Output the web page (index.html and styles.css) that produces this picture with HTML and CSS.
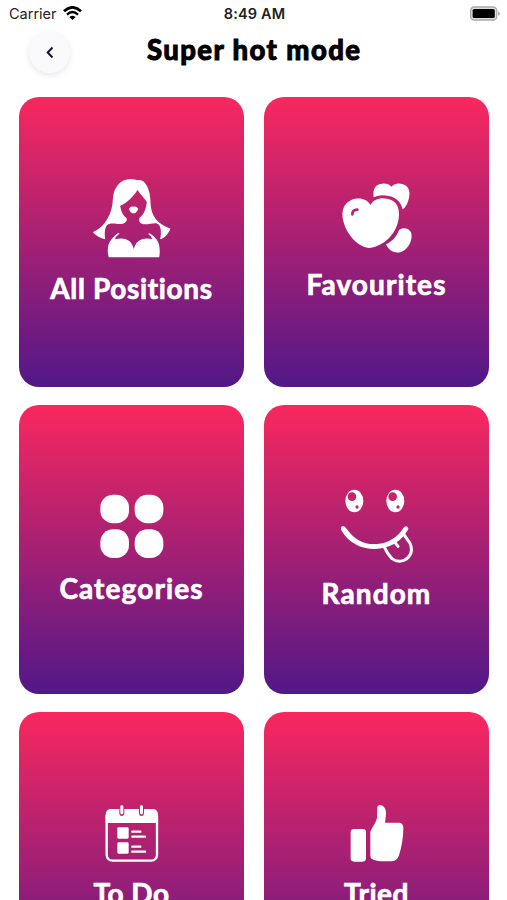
FILE: index.html
```html
<!DOCTYPE html>
<html lang="en">

<head>
    <meta charset="UTF-8">
    <meta name="viewport" content="width=device-width, initial-scale=1.0">
    <title>Super hot mode</title>
    <link rel="stylesheet" href="styles.css">
</head>

<body>
    <div class="status-bar">
        <div class="carrier">
            <span>Carrier</span>
            <svg class="wifi" viewBox="0 0 57 42">
                <path d="M3 16 Q28 -8 54 16" fill="none" stroke="#000" stroke-width="8" />
                <path d="M12 26 Q28 10 45 26" fill="none" stroke="#000" stroke-width="7" />
                <path d="M19 33 Q28 25 38 33 L28.500 42Z" />
            </svg>
        </div>
        <span class="time">8:49 AM</span>
        <svg class="battery" viewBox="0 0 92 44">
            <rect x="2" y="2" width="80" height="40" rx="11" fill="#ddd" stroke="#aaa" stroke-width="4" />
            <rect x="8" y="8" width="68" height="28" rx="5" />
            <path d="M86 15 Q92 17 92 22 Q92 27 86 29Z" fill="#aaa" />
        </svg>
    </div>

    <header>
        <button class="back" aria-label="Back">
            <svg viewBox="0 0 8 13">
                <path d="M6.500 1.500 L1.700 6.500 L6.500 11.500" />
            </svg>
        </button>
        <h1>Super hot mode</h1>
    </header>

    <main class="cards">
        <div class="card all">
            <svg viewBox="36 24 236 240">
                <path d="M151 27 C120 27 100 52 98 88 C97 130 76 170 38 187 C48 198 61 205 75 208 C73 190 73 175 81 165 C94 156 111 164 123 162 C137 160 142 153 139 144 C128 137 122 121 120 107 C142 98 161 78 172 59 C179 72 193 83 200 97 C198 115 191 135 178 143 C174 155 181 162 194 163 C214 163 229 154 237 166 C244 176 243 194 240 208 C255 203 263 192 271 176 C232 163 212 139 211 97 C211 55 193 29 178 30 C169 31 162 27 151 27Z" />
                <path d="M146 116 Q153 107 160 110 Q168 107 174 116 Q169 130 160 130 Q151 130 146 116Z" />
                <path d="M86 262 C80 244 82 222 93 209 Q102 197 114 189 Q120 188 116 193 Q107 199 105 208 C130 201 156 208 161 238 C166 208 194 201 217 208 Q214 198 205 193 Q204 187 211 191 Q222 198 230 209 C240 222 240 248 237 262Z" />
            </svg>
            <span>All Positions</span>
        </div>
        <div class="card favourites">
            <svg viewBox="33 36 213 216">
                <path d="M121 105 C112 86 85 81 64 90 C40 101 32 126 40 154 C50 193 82 230 116 234 C155 231 191 201 203 160 C212 130 207 98 182 89 C158 80 133 84 121 105Z" />
                <path class="shine" d="M67 133 Q67 119 82 119" />
                <path d="M131 82 C127 55 138 42 157 41 C170 40 178 44 184 50 C194 40 207 39 219 43 C239 49 242 70 235 91 C231 105 225 114 218 118 C213 96 197 81 176 78 C158 74 144 76 131 82Z" />
                <path d="M168 223 C186 215 201 198 207 180 C219 170 237 174 243 187 C248 203 242 225 225 239 C205 254 181 250 168 223Z" />
            </svg>
            <span>Favourites</span>
        </div>
        <div class="card categories">
            <svg viewBox="44 41 192 195">
                <rect x="45" y="43" width="86" height="86" rx="38" />
                <rect x="148" y="43" width="86" height="86" rx="38" />
                <rect x="45" y="147" width="86" height="86" rx="38" />
                <rect x="148" y="147" width="86" height="86" rx="38" />
            </svg>
            <span>Categories</span>
        </div>
        <div class="card random">
            <svg viewBox="29 40 222 225">
                <ellipse cx="72" cy="76" rx="27" ry="34" />
                <circle class="pupil" cx="65" cy="63" r="13" />
                <circle class="pupil" cx="80" cy="94" r="5" />
                <ellipse cx="195" cy="76" rx="27" ry="34" />
                <circle class="pupil" cx="187" cy="63" r="13" />
                <circle class="pupil" cx="203" cy="94" r="5" />
                <path d="M33 153 Q40 148 47 157 C72 193 103 208 140 205 C174 203 203 184 219 157 Q226 148 232 154 Q237 159 230 167 C210 200 177 219 134 220 C90 220 55 201 34 166 Q30 158 33 153Z" />
                <path class="line tongue" d="M163 216 Q170 234 185 249 C201 261 222 258 234 245 C247 230 244 213 238 201 L221 177 M192 198 L203 212" />
            </svg>
            <span>Random</span>
        </div>
        <div class="card todo">
            <svg viewBox="59 31 162 174">
                <rect class="line" x="64" y="47" width="151" height="151" rx="17" />
                <path d="M61 85 V60 Q61 43 78 43 H201 Q218 43 218 60 V85Z" />
                <path class="ring-gap" d="M102 42 V57 Q103 64 109.500 64 Q116 64 117 57 V42Z M161 42 V57 Q162 64 168.500 64 Q175 64 176 57 V42Z" />
                <rect x="105" y="32" width="9" height="27" rx="4" />
                <rect x="164" y="32" width="9" height="27" rx="4" />
                <rect x="96" y="98" width="34" height="34" rx="4" />
                <rect x="96" y="143" width="34" height="34" rx="4" />
                <path class="line" d="M141 111 H165 M141 126 H179 M141 156 H165 M141 171 H179" />
            </svg>
            <span>To Do</span>
        </div>
        <div class="card tried">
            <svg viewBox="59 31 162 174">
                <rect x="61" y="103" width="46" height="98" rx="10" />
                <path d="M141 37 Q142 31 149 31 C163 32 168 46 167 59 L164 84 H207 Q219 86 219 99 C219 128 214 157 206 182 Q201 199 184 200 H160 C145 200 133 198 125 193 Q120 190 120 182 V111 C125 98 137 84 140 71Z" />
            </svg>
            <span>Tried</span>
        </div>
    </main>
</body>

</html>
```
FILE: styles.css
```css
* {
    box-sizing: border-box;
}

body {
    margin: 0;
    height: 900px;
    overflow: hidden;
    background-color: #fff;
    font-family: Lato, "Liberation Sans", sans-serif;
}

.status-bar {
    display: grid;
    grid-template-columns: 1fr auto 1fr;
    align-items: center;
    height: 27px;
    padding: 0 7px 0 9px;
    font-family: Inter, "Liberation Sans", sans-serif;
    font-size: 14.5px;
    color: #222;
}

.carrier {
    display: flex;
    align-items: center;
    gap: 6px;
}

.wifi {
    width: 19px;
    height: 14px;
    margin-top: -2px;
}

.time {
    font-weight: 600;
    letter-spacing: .15px;
}

.battery {
    width: 30px;
    height: 15px;
    justify-self: end;
}

header {
    display: grid;
    grid-template-columns: 41px 1fr 41px;
    align-items: center;
    height: 50px;
    padding: 0 29px;
}

.back {
    display: flex;
    align-items: center;
    justify-content: center;
    width: 41px;
    height: 41px;
    padding: 0;
    border: 0;
    border-radius: 50%;
    background-color: #fafafc;
    box-shadow: 0 2px 6px rgba(0, 0, 0, .1);
}

.back svg {
    width: 8px;
    height: 13px;
    fill: none;
    stroke: #15152b;
    stroke-width: 2;
}

h1 {
    margin: 0 0 4px;
    text-align: center;
    font-size: 27.5px;
    font-weight: 900;
    line-height: 34px;
    letter-spacing: 1.4px;
    text-indent: 1.4px;
    white-space: nowrap;
    color: #000;
    -webkit-text-stroke: .9px #000;
}

.cards {
    display: grid;
    grid-template-columns: 225px 225px;
    grid-auto-rows: 289.5px;
    gap: 18.2px 20px;
    padding: 20px 0 0 19px;
}

.card {
    display: flex;
    flex-direction: column;
    align-items: center;
    border-radius: 20px;
    background-image: linear-gradient(#f9285f, #511888);
    color: #fff;
    font-size: 28px;
    font-weight: 700;
    line-height: 34px;
    letter-spacing: 1.1px;
    font-variant-ligatures: none;
    -webkit-text-stroke: .7px #fff;
}

.card svg {
    flex: none;
    fill: #fff;
}

.card .line {
    fill: none;
    stroke: #fff;
    stroke-width: 7;
    stroke-linecap: round;
}

.card .tongue {
    stroke-width: 9;
}

.card .shine {
    fill: none;
    stroke: #b8236d;
    stroke-width: 8;
    stroke-linecap: round;
}

.card .pupil {
    fill: #c6256a;
}

.card .ring-gap {
    fill: #c3256b;
}

.all {
    letter-spacing: .65px;
}

.all svg {
    width: 79px;
    height: 80px;
    margin: 81px 0 13px;
}

.favourites svg {
    width: 71px;
    height: 72px;
    margin: 85px 0 13px;
}

.categories svg {
    width: 64px;
    height: 65px;
    margin: 89px 0 12px;
}

.random svg {
    width: 74px;
    height: 75px;
    margin: 84px 0 12px;
}

.todo,
.tried {
    letter-spacing: .5px;
}

.todo svg,
.tried svg {
    width: 54px;
    height: 58px;
    margin: 93px 0 13px;
}
```
